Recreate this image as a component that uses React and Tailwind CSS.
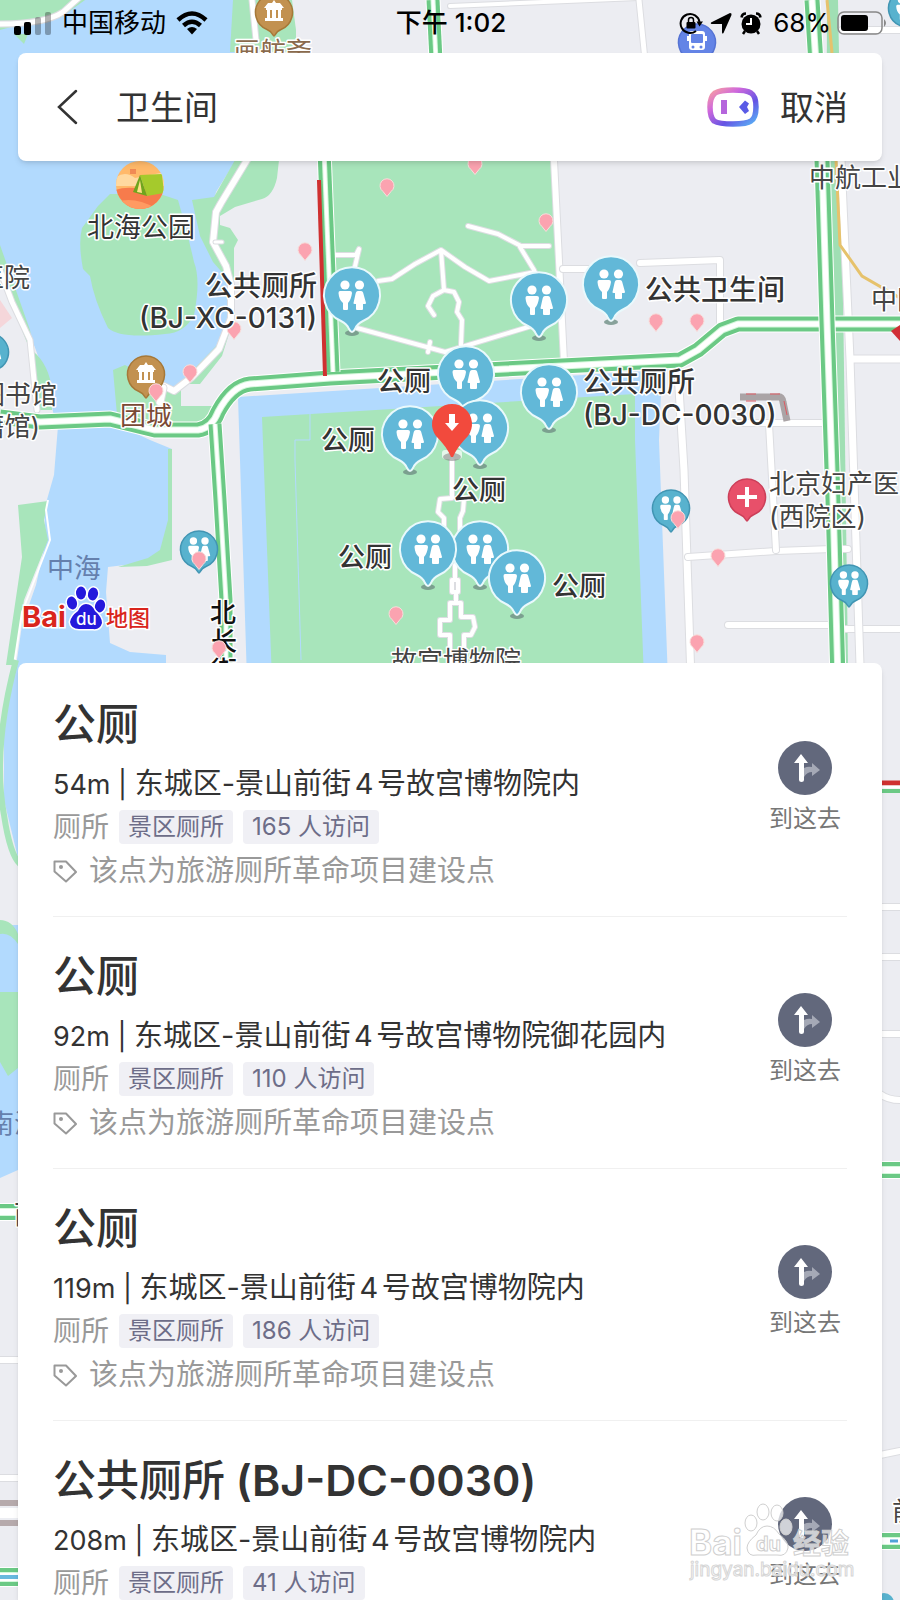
import React, { useState } from 'react';

const places = [
  {
    id: 1,
    name: '公厕',
    distance: '54m',
    address: '东城区-景山前街4号故宫博物院内',
    visits: '165 人访问',
  },
  {
    id: 2,
    name: '公厕',
    distance: '92m',
    address: '东城区-景山前街4号故宫博物院御花园内',
    visits: '110 人访问',
  },
  {
    id: 3,
    name: '公厕',
    distance: '119m',
    address: '东城区-景山前街4号故宫博物院内',
    visits: '186 人访问',
  },
  {
    id: 4,
    name: '公共厕所',
    code: '(BJ-DC-0030)',
    distance: '208m',
    address: '东城区-景山前街4号故宫博物院内',
    visits: '41 人访问',
  },
];

const toiletPins = [
  [352, 295], [539, 300], [611, 284], [466, 374], [549, 392],
  [480, 428], [410, 434], [480, 549], [428, 549], [517, 578],
];

const smallToiletPins = [[-10, 352], [199, 549], [671, 508], [849, 583], [907, 8]];

const pinkPins = [
  [387, 186], [475, 164], [546, 221], [305, 250], [234, 329], [190, 372],
  [656, 321], [697, 321], [718, 556], [697, 642], [396, 614],
];

const labels = [
  { x: 141, y: 237, text: '北海公园', anchor: 'middle', size: 27, weight: 400 },
  { x: 317, y: 296, text: '公共厕所', anchor: 'end', size: 28 },
  { x: 317, y: 328, text: '(BJ-XC-0131)', anchor: 'end', size: 28 },
  { x: 645, y: 300, text: '公共卫生间', size: 28 },
  { x: 583, y: 392, text: '公共厕所', size: 28 },
  { x: 583, y: 425, text: '(BJ-DC-0030)', size: 28 },
  { x: 377, y: 391, text: '公厕', size: 27 },
  { x: 321, y: 450, text: '公厕', size: 27 },
  { x: 452, y: 500, text: '公厕', size: 27 },
  { x: 338, y: 567, text: '公厕', size: 27 },
  { x: 552, y: 596, text: '公厕', size: 27 },
];

// two green lanes with a white centre line
const DoubleRoad = ({ d, width = 15 }) => (
  <g fill="none" strokeLinejoin="round">
    <path d={d} stroke="#fff" strokeWidth={width + 2} />
    <path d={d} stroke="#6bc985" strokeWidth={width} />
    <path d={d} stroke="#d5f8dc" strokeWidth={width - 8} />
    <path d={d} stroke="#fff" strokeWidth={width - 10} />
  </g>
);

const Street = ({ d, width = 8 }) => (
  <g fill="none" strokeLinejoin="round" strokeLinecap="round">
    <path d={d} stroke="#dcdde1" strokeWidth={width + 2} />
    <path d={d} stroke="#fff" strokeWidth={width} />
  </g>
);

const PinkPin = ({ x, y }) => (
  <path
    transform={`translate(${x} ${y})`}
    d="M-4 5.500A7 7 0 1 1 4 5.500L0 10.500Z"
    fill="#fba3b0"
    stroke="#f7dfdc"
    strokeWidth="1"
  />
);

const People = () => (
  <g fill="#fff">
    <circle cx="-7" cy="-10" r="4.6" />
    <path d="M-12 -4H-2Q0 -4 0 -2Q-1 5 -4 8V14Q-4 15 -5 15H-8Q-9 15 -9 14V8Q-13 5 -13.500 -2Q-13.500 -4 -12 -4Z" />
    <circle cx="7.500" cy="-10" r="4.600" />
    <path d="M6 -4H9Q11 -4 11.500 -1L14 8Q14 9 13 9H11V14Q11 15 10 15H5Q4 15 4 14V9H3Q1 9 1.500 8L3.500 -1Q4 -4 6 -4Z" />
  </g>
);

const ToiletPin = ({ x, y }) => (
  <g transform={`translate(${x} ${y})`}>
    <ellipse cx="0" cy="38" rx="7" ry="3" fill="#6f8f84" opacity="0.8" />
    <path
      d="M-11 26A28 28 0 1 1 11 26Q5 29 3 34Q0 40 -3 34Q-5 29 -11 26Z"
      fill="#62b8d8"
      stroke="#e9f9fc"
      strokeWidth="2"
    />
    <People />
  </g>
);

const SmallPin = ({ x, y, fill, stroke, children }) => (
  <g transform={`translate(${x} ${y})`}>
    <path
      d="M-7 17.500A18.500 18.500 0 1 1 7 17.500Q3 19 1 23Q0 25 -1 23Q-3 19 -7 17.500Z"
      fill={fill}
      stroke={stroke}
      strokeWidth="1.500"
    />
    {children}
  </g>
);

const Temple = () => (
  <path
    d="M0 -12L2 -9H6L10 -4H8V-2H7V6H9V9H-9V6H-7V-2H-8V-4H-10L-6 -9H-2ZM-4 -2V6H-2V-2ZM2 -2V6H4V-2Z"
    fill="#fff"
    fillRule="evenodd"
  />
);

const MapView = () => (
  <svg
    className="absolute inset-0 w-full h-full"
    viewBox="0 0 900 1600"
    preserveAspectRatio="xMinYMin slice"
    aria-label="地图"
  >
    <rect width="900" height="1600" fill="#ecedf2" />

    {/* lakes */}
    <path d="M0 0H236V160L216 192L206 240L226 278L230 320L213 356L185 380L170 400V416H54L44 372L24 318L0 262Z" fill="#b2dafe" />
    <path d="M58 426H120L150 440L172 449L168 548L150 562L108 567L106 592L110 643L130 652L166 655V680H14L22 625L36 585L46 540L44 510L54 475Z" fill="#b2dafe" />
    <path d="M0 0H85L60 18L22 24L0 30Z" fill="#a8e5bb" />
    <path d="M14 34L24 44L28 34Z" fill="#a8e5bb" />
    <path d="M233 0H292L296 30V52H230Z" fill="#a8e5bb" />
    <path d="M235 160H279L277 178Q273 196 262 199L235 207L220 216V225L230 228L238 240L234 248V318L222 356L200 384H181V406H214V416L205 426H118L113 370L125 365L172 390L195 368L217 345L228 318L227 278L213 262L200 236L192 200L214 197Z" fill="#a8e5bb" />
    <path d="M98 206L110 194H160L178 200Q188 235 194 262Q201 280 194 315Q185 333 165 334Q120 339 108 328Q94 300 90 276L83 269Q78 243 82 228Z" fill="#a8e5bb" />
    <path d="M0 245L30 330L34 352Q49 365 52 390V410H38L28 345L0 277Z" fill="#a8e5bb" />
    <path d="M18 505L48 501L44 520L48 540L24 600L14 665H6L22 557Z" fill="#a8e5bb" />
    <path d="M172 449V560L147 566L118 567L148 558L160 550L168 520V449Z" fill="#a8e5bb" />
    <path d="M0 300L12 318L0 328Z" fill="#f5d6da" />

    {/* moat and palace grounds */}
    <path d="M238 397L662 370L659 440L668 680H247Z" fill="#b2dafe" />
    <path d="M262 417L635 394V440L644 680H272Z" fill="#a8e5bb" />
    <path d="M310 412V440H295V460L301 660" fill="none" stroke="#b2dafe" strokeWidth="1" />
    <path d="M322 150H552L562 364L334 376Z" fill="#a8e5bb" />
    <path d="M827 0H838L842 220L848 665H838L826 320Z" fill="#a0dfb4" />

    {/* streets */}
    <Street d="M0 24Q45 24 63 12L82 -5" width={5} />
    <Street d="M252 0L256 40" width={5} />
    <Street d="M450 6L638 -2" width={4} />
    <Street d="M639 0L645 60" width={5} />
    <Street d="M247 160L221 203L216 212L213 242L226 266L231 285V318L219 349L192 377L174 391L164 386" width={6} />
    <Street d="M215 242H222" width={3} />
    <Street d="M163 388L160 402" width={7} />
    <Street d="M0 270L12 302L30 340L37 410" width={5} />
    <path d="M48 500L46 510L50 540L22 612L14 665" fill="none" stroke="#fff" strokeWidth="2" />
    <Street d="M554 160L564 362" width={6} />
    <Street d="M563 269H590M640 263L720 260V325" width={6} />
    <Street d="M678 372L684 470L691 680" width={7} />
    <Street d="M688 557L776 551L832 549H848" width={6} />
    <Street d="M740 423H824M769 424L776 550" width={6} />
    <Street d="M728 625H830M846 629H900" width={6} />
    <Street d="M841 160L850 359L853 450L860 665M850 359H900" width={7} />
    <Street d="M842 30H900" width={6} />

    {/* garden paths */}
    <Street d="M333 255L356 255L359 249L353 275M378 281L392 279L415 264L441 250L465 267L489 281L520 275L535 272M468 226L498 234L521 246H549M520 247L534 270M441 250L444 290L433 296L428 306L434 315M444 290L454 292L459 302L457 312L462 320L461 345M357 328L445 352L535 325M428 352L430 342" width={4} />
    <Street d="M452 460V498L440 499L438 512L444 518V530M464 499L463 511L460 518V530M455 565V580M452 580H458V592H452ZM456 592V602M450 665V635H440V620H450V603H461V617H473L475 627L471 635H464V665" width={4} />

    {/* main roads */}
    <DoubleRoad d="M0 417L40 422L110 419L155 430H198Q212 428 218 412Q232 386 250 384L330 378L680 360L698 350L722 330L738 324L900 324" />
    <DoubleRoad d="M215 424L220 500L226 600V680" width={13} />
    <DoubleRoad d="M433 0L436 60" width={13} />
    <DoubleRoad d="M324 150L333 372" width={13} />
    <DoubleRoad d="M812 0L822 160L827 322L833 500L838 680" width={15} />
    <path d="M319 180L325 376" stroke="#cf3030" strokeWidth="4" />
    <path d="M827 0L832 53M836 160L840 245L862 276L900 298" fill="none" stroke="#e6c26c" strokeWidth="3" />
    <path d="M740 397H778Q782 396 783 402L787 421" fill="none" stroke="#aaa4a6" strokeWidth="7" />
    <path d="M746 394H756M770 394H780M746 401H756M784 401L787 415" fill="none" stroke="#dd5a62" strokeWidth="1" />
    <path d="M891 331L900 325V341Z" fill="#d12f36" />

    {/* strip left of the result list */}
    <path d="M18 665L4 700V800L18 858Z" fill="#b2dafe" />
    <path d="M16 660Q-8 750 4 815Q10 855 20 864" fill="none" stroke="#a8e5bb" strokeWidth="6" />
    <path d="M0 925H18V1170L0 1178Z" fill="#b2dafe" />
    <path d="M0 920Q12 920 18 934V944Q10 932 0 934ZM0 992H18V1068L8 1076L0 1062Z" fill="#a8e5bb" />
    <DoubleRoad d="M0 1212H18" width={16} />
    <Street d="M0 1360H18M0 1478H18" width={6} />
    <path d="M0 1503H18M0 1523H18" stroke="#b6aaac" strokeWidth="6" />
    <path d="M0 1513H18" stroke="#fff" strokeWidth="10" />
    <DoubleRoad d="M0 1577H18" width={18} />
    <path d="M0 1577H18" stroke="#69b9df" strokeWidth="4" />

    {/* strip right of the result list */}
    <path d="M880 783H900" stroke="#cf3030" strokeWidth="5" />
    <path d="M880 787H900" stroke="#fff" strokeWidth="3" />
    <path d="M880 791H900" stroke="#6bc985" strokeWidth="4" />
    <Street d="M880 907H900M880 957H900M880 1034H900M880 1094Q888 1100 900 1100M880 1455L900 1451" width={6} />
    <DoubleRoad d="M880 1170H900" width={16} />
    <DoubleRoad d="M880 1541H900" width={16} />
    <path d="M890 1541H898" stroke="#4fa3d8" strokeWidth="3" />
    <circle cx="884" cy="1603" r="10" fill="#58b2ce" />

    {pinkPins.map(([x, y]) => (
      <PinkPin key={`${x}-${y}`} x={x} y={y} />
    ))}

    {smallToiletPins.map(([x, y]) => (
      <SmallPin key={`${x}-${y}`} x={x} y={y} fill="#58b2ce" stroke="#4195b3">
        <g transform="scale(0.8)">
          <People />
        </g>
      </SmallPin>
    ))}
    <PinkPin x={199} y={559} />
    <PinkPin x={678} y={518} />

    <SmallPin x={274} y={12} fill="#c29150" stroke="#a67838"><Temple /></SmallPin>
    <SmallPin x={146} y={374} fill="#c29150" stroke="#a67838"><Temple /></SmallPin>
    <PinkPin x={156} y={391} />
    <SmallPin x={747} y={497} fill="#e8506a" stroke="#cc3f59">
      <path d="M0 -10V10M-10 0H10" stroke="#fff" strokeWidth="4" />
    </SmallPin>
    <SmallPin x={697} y={42} fill="#6484e6" stroke="#5573d4">
      <rect x="-8" y="-11" width="16" height="19" rx="3" fill="#fff" />
      <rect x="-6" y="-8" width="12" height="9" rx="1" fill="#6484e6" />
      <circle cx="-4" cy="5" r="1.500" fill="#6484e6" />
      <circle cx="4" cy="5" r="1.500" fill="#6484e6" />
      <path d="M-9 -6V-1M9 -6V-1" stroke="#fff" strokeWidth="2" />
    </SmallPin>

    {/* Beihai park badge */}
    <clipPath id="park-badge"><circle cx="140" cy="185" r="24" /></clipPath>
    <g clipPath="url(#park-badge)">
      <rect x="115" y="160" width="50" height="50" fill="#ffb96a" />
      <path d="M115 178Q125 170 135 178L165 172V186H115Z" fill="#ffd9a0" />
      <path d="M115 190Q130 184 165 194V210H115Z" fill="#f77b4c" />
      <path d="M115 202Q135 196 155 208V212H115Z" fill="#ff9a62" />
      <path d="M140 175L162 174L164 193L147 196Z" fill="#a5ca2c" />
      <path d="M140 175L147 196L133 192Z" fill="#6ea51e" />
      <path d="M140 180L142 193L137 192Z" fill="#ffe08a" />
      <path d="M130 169H136V174H130Z" fill="#f08a55" />
    </g>

    {toiletPins.map(([x, y]) => (
      <ToiletPin key={`${x}-${y}`} x={x} y={y} />
    ))}

    <g transform="translate(452 424)">
      <rect x="-10" y="26" width="20" height="9" rx="3" fill="#fff" opacity="0.7" />
      <ellipse cx="0" cy="33" rx="9" ry="4" fill="#8a8a8a" opacity="0.6" />
      <path d="M-16 12A20 20 0 1 1 16 12Q5 23 1 33H-1Q-5 23 -16 12Z" fill="#f24a3d" />
      <path d="M-3 -10H3V-1H7L0 7L-7 -1H-3Z" fill="#fff" />
    </g>

    <g fill="#333" stroke="#fff" strokeWidth="3" strokeLinejoin="round" style={{ paintOrder: 'stroke' }}>
      {labels.map((l) => (
        <text
          key={`${l.x}-${l.y}`}
          x={l.x}
          y={l.y}
          textAnchor={l.anchor}
          fontSize={l.size}
          fontWeight={l.weight || 500}
        >
          {l.text}
        </text>
      ))}
      <g fontSize="26" fontWeight="400" fill="#444">
        <text x="809" y="187">中航工业</text>
        <text x="871" y="309">中国</text>
        <text x="769" y="493">北京妇产医院</text>
        <text x="769" y="526">(西院区)</text>
        <text x="30" y="287" textAnchor="end">医院</text>
        <text x="57" y="404" textAnchor="end">图书馆</text>
        <text x="40" y="436" textAnchor="end">(古籍馆)</text>
        <text x="391" y="670">故宫博物院</text>
        <text x="120" y="425" fill="#7a4a35">团城</text>
        <text x="234" y="61" fill="#8a6a4c">画舫斋</text>
        <text x="47" y="578" fontSize="27" fill="#6580ad" stroke="none">中海</text>
        <text x="-12" y="1133" fill="#6580ad" stroke="none">南海</text>
        <text x="14" y="1224">西</text>
        <text x="892" y="1521">前</text>
      </g>
      <g fill="#111" fontSize="26" fontWeight="500">
        <text x="210" y="622">北</text>
        <text x="211" y="651">长</text>
        <text x="211" y="680">街</text>
      </g>
    </g>
    <PinkPin x={219} y={648} />

    {/* Baidu map logo */}
    <g stroke="#fff" strokeWidth="3" fontWeight="700" style={{ paintOrder: 'stroke' }}>
      <text x="22" y="627" fontSize="29" fill="#d9251d">Bai</text>
      <text x="106" y="626" fontSize="22" fontWeight="500" fill="#d9251d">地图</text>
      <g fill="#2419dc">
        <ellipse cx="72" cy="603" rx="5" ry="6.500" transform="rotate(-15 72 603)" />
        <ellipse cx="81" cy="593" rx="5" ry="6.500" />
        <ellipse cx="93" cy="594" rx="5" ry="6.500" transform="rotate(12 93 594)" />
        <ellipse cx="100" cy="606" rx="5" ry="6.500" transform="rotate(18 100 606)" />
        <path d="M86 604Q92 604 95 611Q102 617 102 623Q100 630 93 629H79Q71 629 70 622Q71 616 78 611Q81 604 86 604Z" />
      </g>
      <text x="76" y="625" fontSize="17" fontWeight="500" fill="#fff" stroke="none">du</text>
    </g>
  </svg>
);

const StatusBar = () => (
  <div className="grid grid-cols-3 items-center h-[53px] pl-3.5 pr-3 pb-2 text-[26px] text-black">
    <div className="flex items-center gap-2.5">
      <svg className="w-[38px] h-6" viewBox="0 0 38 24">
        <rect x="0" y="15" width="7" height="9" rx="2" />
        <rect x="10" y="11" width="7" height="13" rx="2" />
        <rect x="21" y="6" width="6" height="18" rx="2" opacity="0.3" />
        <rect x="31" y="1" width="6" height="23" rx="2" opacity="0.3" />
      </svg>
      <span>中国移动</span>
      <svg className="w-8 h-6" viewBox="0 0 32 24" fill="none" stroke="#000" strokeWidth="4.500">
        <path d="M2 9Q16 -4 30 9" />
        <path d="M7.500 14.500Q16 7 24.500 14.500" />
        <path d="M11 18Q16 14 21 18L16 23.500Z" fill="#000" stroke="none" />
      </svg>
    </div>
    <div className="text-center font-medium">下午 1:02</div>
    <div className="flex items-center justify-end gap-1.5">
      <svg className="w-6 h-6" viewBox="0 0 24 24" fill="none" stroke="#000" strokeWidth="2">
        <path d="M17 20A9.500 9.500 0 1 1 20.500 11" />
        <path d="M17.500 10.500H24L20.500 15.500Z" fill="#000" stroke="none" />
        <rect x="7.500" y="11" width="9" height="6.500" rx="1" fill="#000" stroke="none" />
        <path d="M9.500 11V9A2.500 2.500 0 0 1 14.500 9V11" strokeWidth="1.500" />
      </svg>
      <svg className="w-6 h-6" viewBox="0 0 24 24">
        <path d="M2 11.500L21 2Q23 2 22.500 4L14.500 22Q13 23.500 13 21V13H4Q1 13 2 11.500Z" />
      </svg>
      <svg className="w-6 h-6" viewBox="0 0 24 24">
        <circle cx="12" cy="13" r="9.500" />
        <path d="M2.500 6.500Q3 2.500 7 2.500M21.500 6.500Q21 2.500 17 2.500M6 20L4 23M18 20L20 23" fill="none" stroke="#000" strokeWidth="2.500" />
        <path d="M12 7V13H7" fill="none" stroke="#fff" strokeWidth="2" />
      </svg>
      <span className="pl-1">68%</span>
      <svg className="w-[51px] h-6" viewBox="2 0 51 24">
        <rect x="3" y="1" width="44" height="22" rx="6" fill="none" stroke="#888" strokeWidth="1.500" />
        <rect x="6" y="4" width="27" height="16" rx="3" />
        <path d="M49 8Q53 12 49 16Z" fill="#888" />
      </svg>
    </div>
  </div>
);

const SearchBar = ({ keyword, onChange }) => (
  <header className="flex items-center mx-[18px] h-[108px] pl-9 pr-[34px] bg-white rounded-lg shadow-md text-[34px] text-[#333]">
    <button aria-label="返回" className="w-[62px] h-16 flex items-center shrink-0">
      <svg className="w-7 h-10" viewBox="0 0 28 40" fill="none" stroke="#333" strokeWidth="2.500" strokeLinecap="round">
        <path d="M22 4L5 20L22 36" />
      </svg>
    </button>
    <input
      aria-label="搜索地点"
      className="flex-1 min-w-0 bg-transparent outline-none"
      value={keyword}
      onChange={(e) => onChange(e.target.value)}
    />
    <button aria-label="语音助手" className="mr-5">
      <svg className="w-[54px] h-[42px]" viewBox="0 0 54 42">
        <defs>
          <linearGradient id="bot" x1="0" y1="0" x2="1" y2="1">
            <stop offset="0" stopColor="#f9a0a0" />
            <stop offset="0.3" stopColor="#cf68dc" />
            <stop offset="0.65" stopColor="#6554e4" />
            <stop offset="1" stopColor="#58b4f6" />
          </linearGradient>
        </defs>
        <path
          d="M27 4Q41 4 45 7Q50 10 50 21Q50 32 45 35Q41 38 27 38Q13 38 8 35Q4 31 4 21Q4 11 9 7Q14 4 27 4Z"
          fill="none"
          stroke="url(#bot)"
          strokeWidth="5.500"
        />
        <rect x="15" y="14" width="6" height="14" fill="#b565dc" />
        <path d="M33 21L39 14.500L43 17.500L41 21L43 25L39 28Z" fill="#5a5be6" />
      </svg>
    </button>
    <button className="shrink-0">取消</button>
  </header>
);

const PlaceItem = ({ place }) => (
  <li className="flex items-center justify-between h-[252px] pt-[30px] pb-[27px] border-b border-[#f0f0f0]">
    <div className="min-w-0">
      <h2 className="text-[43px] leading-[56px] font-medium text-[#333]">
        {place.name}
        {place.code && <span className="font-semibold"> {place.code}</span>}
      </h2>
      <p className="mt-2.5 text-[29px] leading-[44px] text-[#333] whitespace-nowrap">
        <span className="text-[27px]">{place.distance} | </span>
        {place.address}
      </p>
      <div className="mt-[3px] flex items-center gap-2.5 h-[34px]">
        <span className="text-[28px] text-[#999]">厕所</span>
        <span className="h-[34px] px-[9px] rounded-sm bg-[#f0f0f5] text-2xl leading-[34px] text-[#6d6d88]">景区厕所</span>
        <span className="h-[34px] px-[9px] rounded-sm bg-[#f0f0f5] text-2xl leading-[34px] text-[#6d6d88]">{place.visits}</span>
      </div>
      <p className="mt-[9px] flex items-center gap-3 text-[29px] leading-9 text-[#999]">
        <svg className="w-6 h-6 shrink-0" viewBox="0 0 24 24" fill="none" stroke="#999" strokeWidth="2" strokeLinejoin="round">
          <path d="M1.500 2.500H13L23 13L13 22.500L1.500 12.500Z" />
          <circle cx="8" cy="8" r="2" fill="#999" stroke="none" />
        </svg>
        该点为旅游厕所革命项目建设点
      </p>
    </div>
    <button className="flex flex-col items-center gap-2 mb-2 mr-1.5 text-2xl text-[#777]">
      <svg className="w-[54px] h-[54px]" viewBox="0 0 54 54">
        <circle cx="27" cy="27" r="27" fill="#62687c" />
        <path d="M26 36V27Q30 25 34 26V22L42 29L34 35V31Q29 31 26 36Z" fill="#a5a9b6" />
        <path d="M23 13L30 22H26V39Q26 41 23.500 41Q21 41 21 39V22H16Z" fill="#fff" />
      </svg>
      到这去
    </button>
  </li>
);

const Watermark = () => (
  <svg className="absolute bottom-0 right-10 w-[180px] h-[100px] pointer-events-none" viewBox="0 0 180 100">
    <g fill="#fff" fillOpacity="0.7" stroke="#cfcfcf" strokeWidth="1" fontWeight="700">
      <text x="9" y="55" fontSize="35">Bai</text>
      <ellipse cx="71" cy="23" rx="6" ry="8" />
      <ellipse cx="83" cy="12" rx="6" ry="8" />
      <ellipse cx="97" cy="13" rx="6" ry="8" />
      <ellipse cx="106" cy="27" rx="6" ry="8" />
      <path d="M87 26Q94 26 99 34Q109 42 108 48Q106 57 97 55H77Q68 57 67 48Q67 42 76 35Q80 26 87 26Z" />
      <text x="76" y="51" fontSize="20">du</text>
      <text x="113" y="54" fontSize="28">经验</text>
    </g>
    <text x="10" y="76" fontSize="19" fill="#fff" fillOpacity="0.7" stroke="#d6d6d6" strokeWidth="1">jingyan.baidu.com</text>
  </svg>
);

const App = () => {
  const [keyword, setKeyword] = useState('卫生间');

  return (
    <div
      lang="zh-CN"
      className="relative h-screen overflow-hidden flex flex-col font-['Inter','Noto_Sans_CJK_SC',sans-serif] [text-autospace:normal]"
    >
      <MapView />
      <div className="relative flex-1 min-h-0 flex flex-col">
        <StatusBar />
        <SearchBar keyword={keyword} onChange={setKeyword} />
        <ul className="flex-1 min-h-0 overflow-hidden mt-[502px] mx-[18px] px-[35px] pt-0.5 bg-white rounded-t-lg shadow-md">
          {places.map((place) => (
            <PlaceItem key={place.id} place={place} />
          ))}
        </ul>
      </div>
      <Watermark />
    </div>
  );
};

export default App;
